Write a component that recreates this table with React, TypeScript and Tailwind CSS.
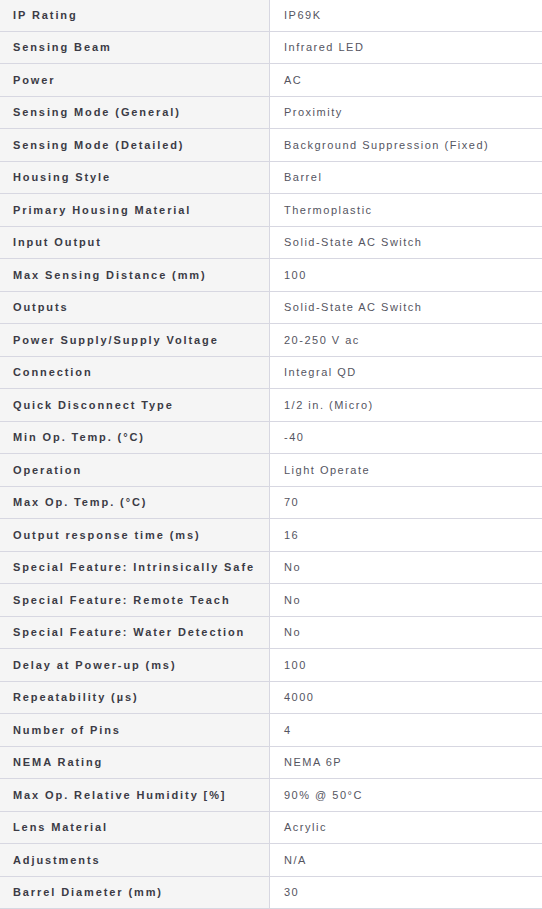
const specs: [string, string][] = [
  ['IP Rating', 'IP69K'],
  ['Sensing Beam', 'Infrared LED'],
  ['Power', 'AC'],
  ['Sensing Mode (General)', 'Proximity'],
  ['Sensing Mode (Detailed)', 'Background Suppression (Fixed)'],
  ['Housing Style', 'Barrel'],
  ['Primary Housing Material', 'Thermoplastic'],
  ['Input Output', 'Solid-State AC Switch'],
  ['Max Sensing Distance (mm)', '100'],
  ['Outputs', 'Solid-State AC Switch'],
  ['Power Supply/Supply Voltage', '20-250 V ac'],
  ['Connection', 'Integral QD'],
  ['Quick Disconnect Type', '1/2 in. (Micro)'],
  ['Min Op. Temp. (°C)', '-40'],
  ['Operation', 'Light Operate'],
  ['Max Op. Temp. (°C)', '70'],
  ['Output response time (ms)', '16'],
  ['Special Feature: Intrinsically Safe', 'No'],
  ['Special Feature: Remote Teach', 'No'],
  ['Special Feature: Water Detection', 'No'],
  ['Delay at Power-up (ms)', '100'],
  ['Repeatability (µs)', '4000'],
  ['Number of Pins', '4'],
  ['NEMA Rating', 'NEMA 6P'],
  ['Max Op. Relative Humidity [%]', '90% @ 50°C'],
  ['Lens Material', 'Acrylic'],
  ['Adjustments', 'N/A'],
  ['Barrel Diameter (mm)', '30'],
];

export default function App() {
  return (
    <div className="-mt-px w-[542px] bg-white font-['Liberation_Sans',Arial,sans-serif] text-[11px]">
      {specs.map(([label, value]) => (
        <div key={label} className="flex h-[32.5px] border-b border-[#d7d7e1]">
          <div className="flex w-[270px] shrink-0 items-center border-r border-[#d7d7e1] bg-[#f5f5f5] pl-[13px] font-bold tracking-[1.9px] text-[#3b3b45]">
            {label}
          </div>
          <div className="flex flex-1 items-center pl-[14px] tracking-[1.5px] text-[#55555f]">
            {value}
          </div>
        </div>
      ))}
    </div>
  );
}
